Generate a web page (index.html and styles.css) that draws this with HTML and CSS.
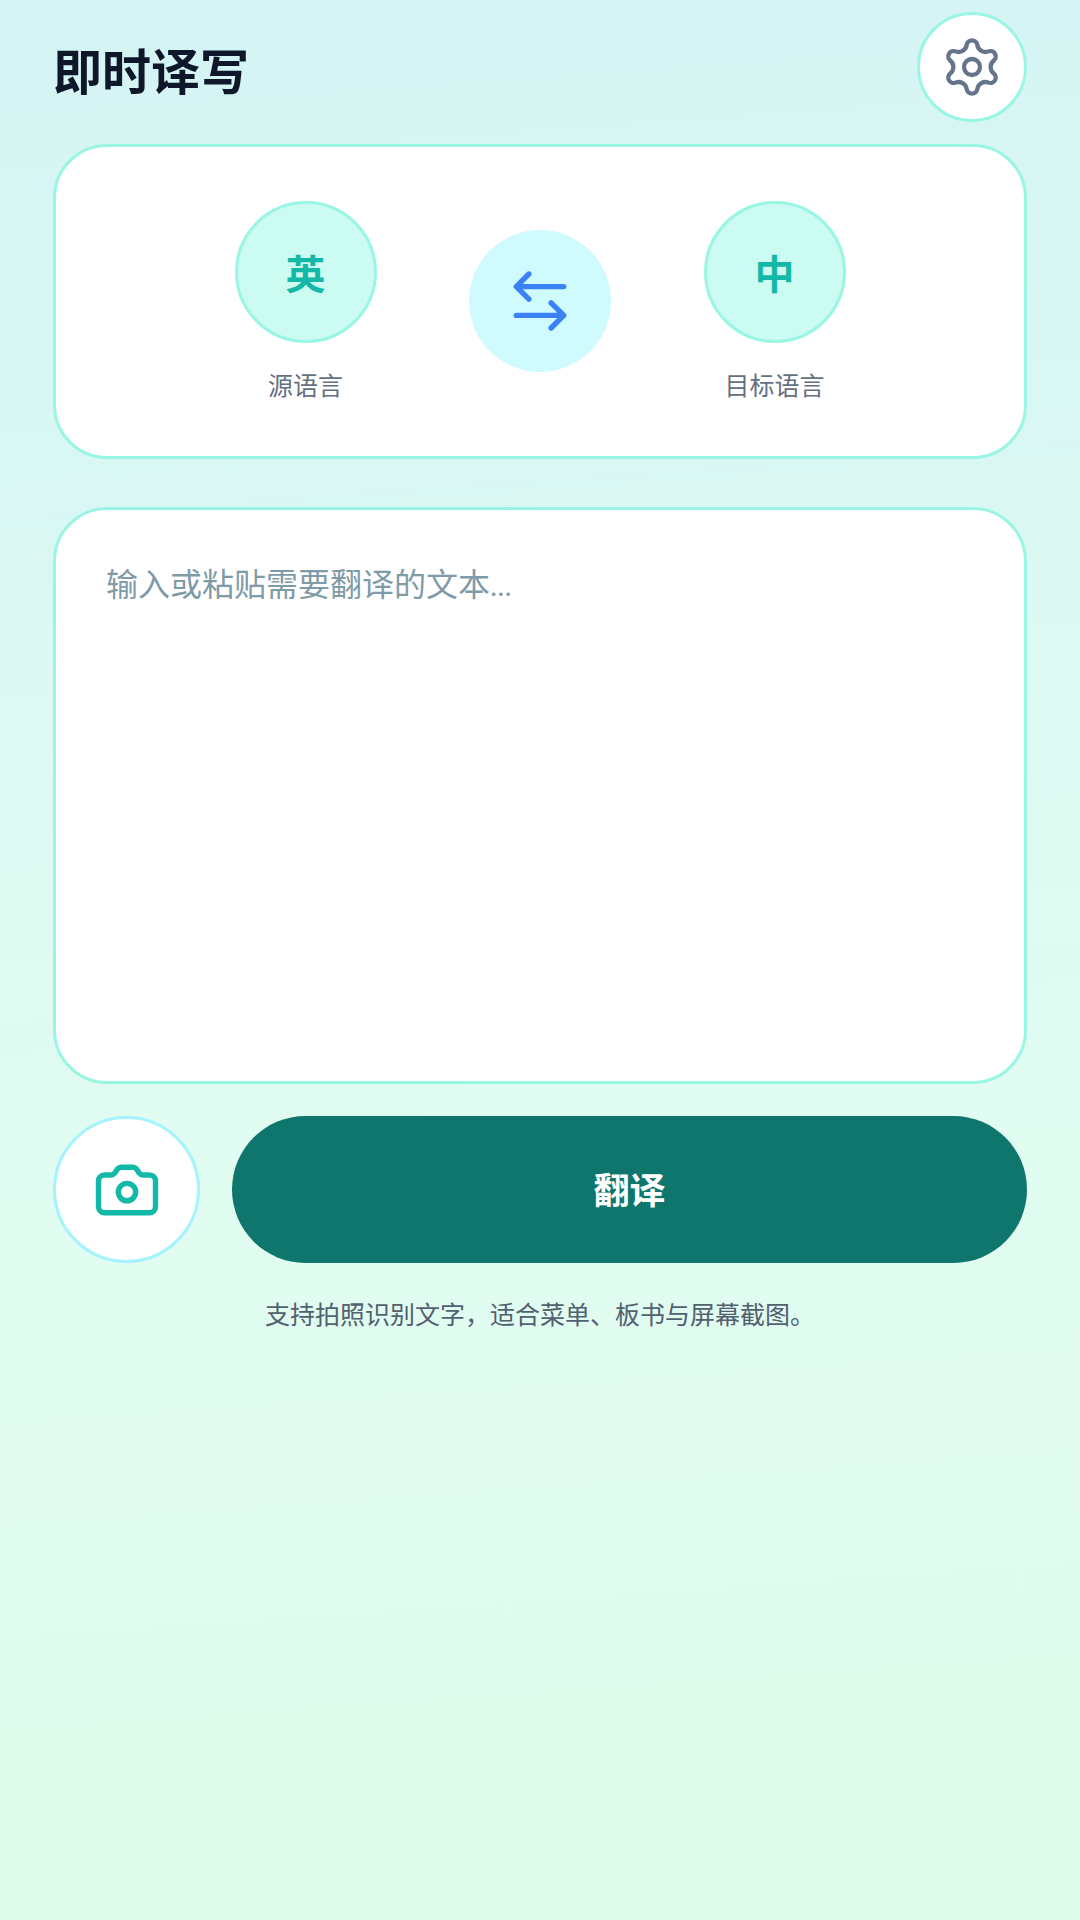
FILE: index.html
```html
<!DOCTYPE html>
<html lang="zh-CN">
<head>
    <meta charset="UTF-8">
    <meta name="viewport" content="width=device-width, initial-scale=1.0">
    <title>即时译写</title>
    <link rel="stylesheet" href="styles.css">
</head>
<body>
    <header class="top">
        <h1 class="title">即时译写</h1>
        <button class="icon-btn settings" type="button" aria-label="设置">
            <svg class="gear" viewBox="0 0 24 24">
                <path d="M10.02 3.7A2 2 0 0 1 13.98 3.7A3.11 3.11 0 0 0 18.2 6.14A2 2 0 0 1 20.17 9.56A3.11 3.11 0 0 0 20.17 14.44A2 2 0 0 1 18.2 17.86A3.11 3.11 0 0 0 13.98 20.3A2 2 0 0 1 10.02 20.3A3.11 3.11 0 0 0 5.8 17.86A2 2 0 0 1 3.83 14.44A3.11 3.11 0 0 0 3.83 9.56A2 2 0 0 1 5.8 6.14A3.11 3.11 0 0 0 10.02 3.7Z"/>
                <circle cx="12" cy="12" r="3"/>
            </svg>
        </button>
    </header>

    <section class="card lang-card">
        <div class="lang">
            <div class="lang-badge">英</div>
            <div class="lang-label">源语言</div>
        </div>
        <button class="swap" type="button" aria-label="交换">
            <svg class="swap-icon" viewBox="0 0 24 24">
                <path d="M19.9 7.2H4.1M8.3 3L4.1 7.2L8.3 11.4"/>
                <path d="M4.1 16.8H19.9M15.7 12.6L19.9 16.8L15.7 21"/>
            </svg>
        </button>
        <div class="lang">
            <div class="lang-badge">中</div>
            <div class="lang-label">目标语言</div>
        </div>
    </section>

    <section class="card input-card">
        <div class="placeholder">输入或粘贴需要翻译的文本<span class="dots">...</span></div>
    </section>

    <div class="actions">
        <button class="icon-btn camera" type="button" aria-label="拍照">
            <svg class="camera-icon" viewBox="0 0 24 24">
                <path d="M4.5 19.6h15a2 2 0 0 0 2-2V9a2 2 0 0 0-2-2h-2.2a1.5 1.5 0 0 1-1.2-.6l-.8-1.2a1.8 1.8 0 0 0-1.5-.8h-3.6a1.8 1.8 0 0 0-1.5.8l-.8 1.2a1.5 1.5 0 0 1-1.2.6H4.5a2 2 0 0 0-2 2v8.6a2 2 0 0 0 2 2z"/>
                <circle cx="12" cy="12.7" r="2.9"/>
            </svg>
        </button>
        <button class="translate" type="button">翻译</button>
    </div>

    <p class="hint">支持拍照识别文字，适合菜单、板书与屏幕截图。</p>
</body>
</html>
```

FILE: styles.css
```css
* { box-sizing: border-box; }
body { margin: 0; min-height: 1920px; padding: 12px 53px 0; background: linear-gradient(176deg, #d4f4f4 0%, #e1fcf1 60%, #defbea 100%); font-family: "Noto Sans CJK SC", "Noto Sans", sans-serif; color: #0f172a; }
button { font-family: inherit; padding: 0; cursor: pointer; }
svg { display: block; fill: none; stroke-linecap: round; stroke-linejoin: round; }

.top { display: flex; justify-content: space-between; align-items: center; height: 109px; }
.title { margin: 3px 0 0; font-size: 49px; font-weight: 700; line-height: 1; }
.icon-btn { display: flex; align-items: center; justify-content: center; background: #fff; border-radius: 50%; }
.settings { width: 110px; height: 110px; border: 3px solid #99f6e4; }
.gear { width: 64px; height: 64px; stroke: #64748b; stroke-width: 1.6; }

.card { background: #fff; border: 3px solid #99f6e4; border-radius: 54px; }
.lang-card { display: flex; justify-content: center; align-items: center; gap: 92.5px; height: 315px; margin-top: 23px; padding-bottom: 1px; }
.lang { display: flex; flex-direction: column; align-items: center; width: 142px; gap: 23px; }
.lang-badge { display: flex; align-items: center; justify-content: center; width: 142px; height: 142px; border-radius: 50%; background: #ccfbf1; border: 3px solid #99f6e4; color: #14b8a6; font-size: 40px; font-weight: 700; }
.lang-label { font-size: 25px; line-height: 36px; color: #64707f; white-space: nowrap; }
.swap { display: flex; align-items: center; justify-content: center; width: 142px; height: 142px; border: 0; border-radius: 50%; background: #cffafe; }
.swap-icon { width: 72px; height: 72px; stroke: #3b82f6; stroke-width: 1.8; }

.input-card { height: 577px; margin-top: 48px; padding: 48px 50px; }
.placeholder { font-size: 32px; line-height: 48px; color: #7f9ba8; }
.dots { font-size: 26px; }

.actions { display: flex; gap: 32px; margin-top: 32px; }
.camera { flex: none; width: 147px; height: 147px; border: 3px solid #a5f3fc; }
.camera-icon { width: 72px; height: 72px; stroke: #14b8a6; stroke-width: 1.8; }
.translate { flex: 1; height: 147px; padding-bottom: 3px; border: 0; border-radius: 74px; background: #0f766e; color: #fff; font-size: 36px; font-weight: 700; }

.hint { margin: 30px 0 0; text-align: center; font-size: 25px; line-height: 40px; color: #526070; }
```
